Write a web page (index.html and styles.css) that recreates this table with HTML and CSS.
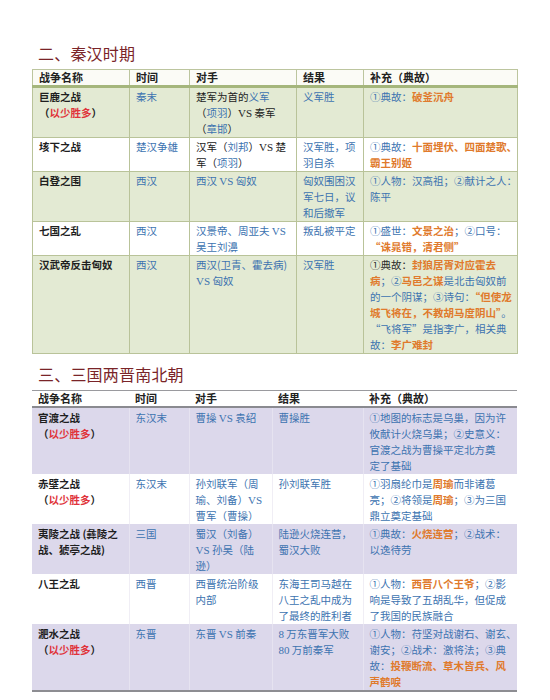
FILE: index.html
```html
<!DOCTYPE html>
<html lang="zh-CN">
<head>
<meta charset="utf-8">
<title>战争表</title>
<link rel="stylesheet" href="styles.css">
</head>
<body>
<div class="page">
  <h2 class="title t1">二、秦汉时期</h2>
  <table class="tbl green">
    <colgroup><col class="c1"><col class="c2"><col class="c3a"><col class="c4a"><col class="c5"></colgroup>
    <thead>
      <tr><th>战争名称</th><th>时间</th><th>对手</th><th>结果</th><th>补充（典故）</th></tr>
    </thead>
    <tbody>
      <tr class="alt">
        <td class="nm">巨鹿之战<br>（<span class="rd">以少胜多</span>）</td>
        <td class="bl">秦末</td>
        <td>楚军为首的<span class="bl">义军</span><br>（<span class="bl">项羽</span>）<span class="vs">VS</span> 秦军<br>（<span class="bl">章邯</span>）</td>
        <td class="bl">义军胜</td>
        <td class="bl">①典故：<span class="or">破釜沉舟</span></td>
      </tr>
      <tr>
        <td class="nm">垓下之战</td>
        <td class="bl">楚汉争雄</td>
        <td>汉军（<span class="bl">刘邦</span>）<span class="vs">VS</span> 楚<br>军（<span class="bl">项羽</span>）</td>
        <td class="bl">汉军胜，项<br>羽自杀</td>
        <td class="bl">①典故：<span class="or">十面埋伏、四面楚歌、<br>霸王别姬</span></td>
      </tr>
      <tr class="alt">
        <td class="nm">白登之围</td>
        <td class="bl">西汉</td>
        <td class="bl">西汉 <span class="vs">VS</span> 匈奴</td>
        <td class="bl">匈奴围困汉<br>军七日，议<br>和后撤军</td>
        <td class="bl">①人物：汉高祖；②献计之人：<br>陈平</td>
      </tr>
      <tr>
        <td class="nm">七国之乱</td>
        <td class="bl">西汉</td>
        <td class="bl">汉景帝、周亚夫 <span class="vs">VS</span><br>吴王刘濞</td>
        <td class="bl">叛乱被平定</td>
        <td class="bl">①盛世：<span class="or">文景之治</span>；②口号：<br><span class="or">“诛晁错，清君侧”</span></td>
      </tr>
      <tr class="alt">
        <td class="nm">汉武帝反击匈奴</td>
        <td class="bl">西汉</td>
        <td class="bl">西汉(卫青、霍去病)<br><span class="vs">VS</span> 匈奴</td>
        <td class="bl">汉军胜</td>
        <td class="bl"><span class="dk">①典故：</span><span class="or">封狼居胥对应霍去<br>病</span>；②<span class="or">马邑之谋</span>是北击匈奴前<br>的一个阴谋；③诗句：<span class="or">“但使龙<br>城飞将在，不教胡马度阴山”</span>。<br>“飞将军”是指李广，相关典<br>故：<span class="or">李广难封</span></td>
      </tr>
    </tbody>
  </table>

  <h2 class="title t2">三、三国两晋南北朝</h2>
  <table class="tbl purple">
    <colgroup><col class="c1"><col class="c2"><col class="c3b"><col class="c4b"><col class="c5"></colgroup>
    <thead>
      <tr><th>战争名称</th><th>时间</th><th>对手</th><th>结果</th><th>补充（典故）</th></tr>
    </thead>
    <tbody>
      <tr class="alt">
        <td class="nm">官渡之战<br>（<span class="rd">以少胜多</span>）</td>
        <td class="bl">东汉末</td>
        <td class="bl">曹操 <span class="vs">VS</span> 袁绍</td>
        <td class="bl">曹操胜</td>
        <td class="bl">①地图的标志是乌巢，因为许<br>攸献计火烧乌巢；②史意义：<br>官渡之战为曹操平定北方奠<br>定了基础</td>
      </tr>
      <tr>
        <td class="nm">赤壁之战<br>（<span class="rd">以少胜多</span>）</td>
        <td class="bl">东汉末</td>
        <td class="bl">孙刘联军（周<br>瑜、刘备）<span class="vs">VS</span><br>曹军（曹操）</td>
        <td class="bl">孙刘联军胜</td>
        <td class="bl">①羽扇纶巾是<span class="or">周瑜</span>而非诸葛<br>亮；②将领是<span class="or">周瑜</span>；③为三国<br>鼎立奠定基础</td>
      </tr>
      <tr class="alt">
        <td class="nm">夷陵之战 (彝陵之<br>战、猇亭之战)</td>
        <td class="bl">三国</td>
        <td class="bl">蜀汉（刘备）<br><span class="vs">VS</span> 孙吴（陆<br>逊）</td>
        <td class="bl">陆逊火烧连营，<br>蜀汉大败</td>
        <td class="bl">①典故：<span class="or">火烧连营</span>；②战术：<br>以逸待劳</td>
      </tr>
      <tr>
        <td class="nm">八王之乱</td>
        <td class="bl">西晋</td>
        <td class="bl">西晋统治阶级<br>内部</td>
        <td class="bl">东海王司马越在<br>八王之乱中成为<br>了最终的胜利者</td>
        <td class="bl">①人物：<span class="or">西晋八个王爷</span>；②影<br>响是导致了五胡乱华，但促成<br>了我国的民族融合</td>
      </tr>
      <tr class="alt">
        <td class="nm">淝水之战<br>（<span class="rd">以少胜多</span>）</td>
        <td class="bl">东晋</td>
        <td class="bl">东晋 <span class="vs">VS</span> 前秦</td>
        <td class="bl"><span class="vs">8</span> 万东晋军大败<br><span class="vs">80</span> 万前秦军</td>
        <td class="bl">①人物：苻坚对战谢石、谢玄、<br>谢安；②战术：激将法；③典<br>故：<span class="or">投鞭断流、草木皆兵、风<br>声鹤唳</span></td>
      </tr>
    </tbody>
  </table>
</div>
</body>
</html>
```

FILE: styles.css
```css
html, body {
  margin: 0;
  padding: 0;
  background: #ffffff;
}
.page {
  padding: 0 0 0 32px;
  width: 485px;
  font-family: "Noto Sans CJK SC", "Noto Sans", sans-serif;
  font-size: 10.5px;
  color: #222222;
}
.title {
  margin: 0;
  font-size: 16px;
  line-height: 20px;
  font-weight: normal;
  color: #7a2428;
  padding-left: 6px;
  letter-spacing: 0.2px;
}
.t1 {
  padding-top: 43px;
  margin-bottom: 6px;
}
.t2 {
  margin-top: 10px;
  margin-bottom: 6px;
}
.tbl {
  border-collapse: collapse;
  table-layout: fixed;
  width: 485px;
}
.c1 { width: 97px; }
.c2 { width: 60px; }
.c3a { width: 107px; }
.c4a { width: 67px; }
.c3b { width: 83px; }
.c4b { width: 91px; }
.c5 { width: 154px; }
.tbl th, .tbl td {
  text-align: left;
  vertical-align: top;
  white-space: nowrap;
  overflow: visible;
  line-height: 16px;
}
.tbl th {
  font-weight: bold;
  font-size: 11px;
  padding: 0 6px;
  line-height: 15px;
}
.tbl td {
  padding: 1px 5px 0 6px;
}
.purple td {
  padding: 2px 5px 0 6px;
}
.nm {
  font-weight: bold;
  color: #1e1e1e;
}
.bl { color: #3c73b0; }
.or { color: #e07a2c; font-weight: bold; }
.rd { color: #e0333a; }
.dk { color: #2a2a2a; }
.vs {
  font-family: "Liberation Serif", serif;
  font-size: 11px;
}

/* green table */
.green th {
  background: #fbfbf6;
  border: 1px solid #bcc59e;
  border-bottom: 3px solid #a5b67c;
}
.green td {
  border: 1px solid #b9c399;
  background: #ffffff;
}
.green tr.alt td {
  background: #e3ead3;
}

/* purple table */
.purple th {
  background: #ffffff;
  border-top: 1px solid #9a9a9e;
  border-bottom: 2px solid #8a8a90;
}
.purple td {
  background: #ffffff;
  border-left: 1px solid #f0eef5;
}
.purple td:first-child {
  border-left: none;
}
.purple tr.alt td {
  background: #dcd8eb;
  border-left: 1px solid #e6e3f0;
}
.purple tr.alt td:first-child {
  border-left: none;
}
.purple tbody tr:last-child td {
  border-bottom: 2px solid #8d8d92;
}
```
